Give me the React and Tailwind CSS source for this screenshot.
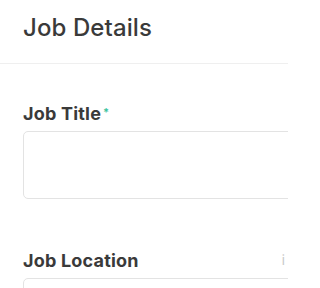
import React from "react";

const Box = () => (
  <div className="mt-[5px] h-[68px] w-[400px] rounded-[5px] border border-[#e3e3e3] bg-white"></div>
);

const App = () => {
  return (
    <div
      className="w-[288px] h-[288px] overflow-hidden bg-white"
      style={{ fontFamily: "Inter, 'Noto Sans', sans-serif" }}>
      <div className="h-[64px] border-b border-[#efefef] pl-[23px] pt-[12px]">
        <h1 className="text-[24px] font-medium text-[#3a3a3a] leading-8 tracking-[0.1px]">Job Details</h1>
      </div>
      <div className="pl-[23px] pt-[38px] flex flex-col gap-[50px]">
        <div className="flex flex-col">
          <label className="text-[18px] font-bold text-[#3a3a3a] leading-6 tracking-[0.2px]">
            Job Title
            <span className="text-[#3cc3a0] text-[11px] align-top relative top-[-2px] ml-[2px]">*</span>
          </label>
          <Box />
        </div>
        <div className="w-[262px]">
          <div className="flex items-center justify-between">
            <label className="text-[18px] font-bold text-[#3a3a3a] leading-6 tracking-[0.2px]">
              Job Location
            </label>
            <span className="text-[13px] text-[#c8c8c8]">i</span>
          </div>
          <Box />
        </div>
      </div>
    </div>
  );
};

export default App;
